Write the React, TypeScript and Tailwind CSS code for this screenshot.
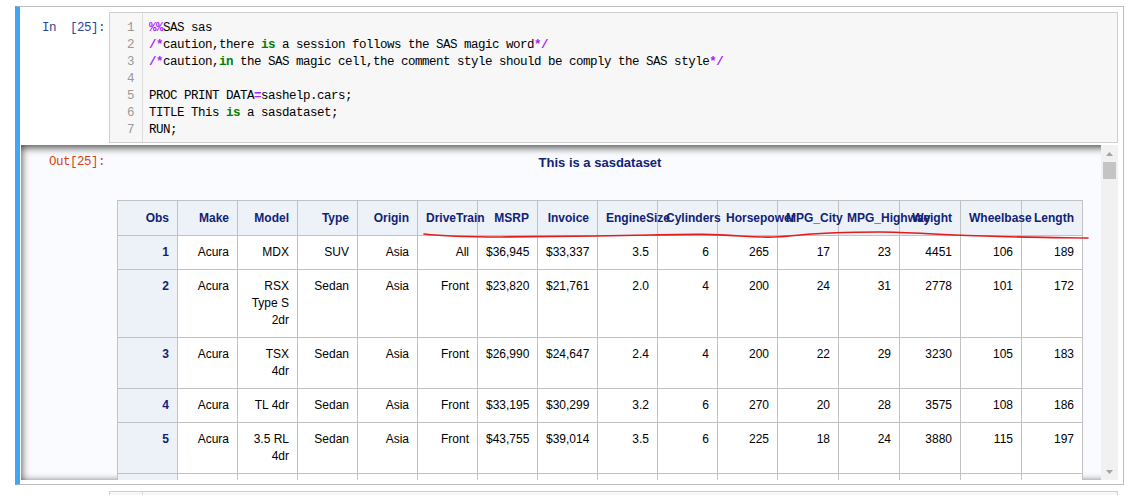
const headers = [
  'Obs', 'Make', 'Model', 'Type', 'Origin', 'DriveTrain', 'MSRP', 'Invoice', 'EngineSize',
  'Cylinders', 'Horsepower', 'MPG_City', 'MPG_Highway', 'Weight', 'Wheelbase', 'Length',
];

const rows = [
  ['1', 'Acura', 'MDX', 'SUV', 'Asia', 'All', '$36,945', '$33,337', '3.5', '6', '265', '17', '23', '4451', '106', '189'],
  ['2', 'Acura', 'RSX Type S 2dr', 'Sedan', 'Asia', 'Front', '$23,820', '$21,761', '2.0', '4', '200', '24', '31', '2778', '101', '172'],
  ['3', 'Acura', 'TSX 4dr', 'Sedan', 'Asia', 'Front', '$26,990', '$24,647', '2.4', '4', '200', '22', '29', '3230', '105', '183'],
  ['4', 'Acura', 'TL 4dr', 'Sedan', 'Asia', 'Front', '$33,195', '$30,299', '3.2', '6', '270', '20', '28', '3575', '108', '186'],
  ['5', 'Acura', '3.5 RL 4dr', 'Sedan', 'Asia', 'Front', '$43,755', '$39,014', '3.5', '6', '225', '18', '24', '3880', '115', '197'],
  ['6', 'Acura', '3.5 RL w/Navigation 4dr', 'Sedan', 'Asia', 'Front', '$46,100', '$41,100', '3.5', '6', '225', '18', '24', '3893', '115', '197'],
];

// column widths: first 11 are 60px, the rest 61px
const colWidths = headers.map((_, i) => (i < 11 ? 60 : 61));

type Tok = { t: string; c?: 'op' | 'kw' };

const code: Tok[][] = [
  [{ t: '%%', c: 'op' }, { t: 'SAS sas' }],
  [{ t: '/*', c: 'op' }, { t: 'caution,there ' }, { t: 'is', c: 'kw' }, { t: ' a session follows the SAS magic word' }, { t: '*/', c: 'op' }],
  [{ t: '/*', c: 'op' }, { t: 'caution,' }, { t: 'in', c: 'kw' }, { t: ' the SAS magic cell,the comment style should be comply the SAS style' }, { t: '*/', c: 'op' }],
  [],
  [{ t: 'PROC PRINT DATA' }, { t: '=', c: 'op' }, { t: 'sashelp.cars;' }],
  [{ t: 'TITLE This ' }, { t: 'is', c: 'kw' }, { t: ' a sasdataset;' }],
  [{ t: 'RUN;' }],
];

const mono = "font-['Liberation_Mono',monospace] text-[12.5px] tracking-[-0.5px] leading-[17px]";

function Arrow({ down }: { down?: boolean }) {
  return (
    <svg width="7" height="4" viewBox="0 0 7 4">
      <polygon points={down ? '0,0 7,0 3.5,4' : '0,4 7,4 3.5,0'} fill="#a3a3a3" />
    </svg>
  );
}

export default function App() {
  return (
    <div className="relative w-[1135px] h-[495px] overflow-hidden bg-white pt-[6px]">
      {/* selected cell */}
      <div className="ml-[15px] w-[1109px] border border-[#bdbdbd] border-l-[5px] border-l-[#42a5f5] pl-px pr-[5px] pt-[5px] pb-[4px]">
        {/* input area */}
        <div className="flex">
          <div className={`w-[88px] shrink-0 pt-[8px] pr-[4px] text-right text-[#303f9f] whitespace-pre ${mono}`}>
            {'In\u00a0\u00a0[25]:'}
          </div>
          <div className="flex-1 flex border border-[#cfcfcf] bg-[#f7f7f7] h-[131px]">
            <div className={`w-[33px] shrink-0 border-r border-[#dddddd] pt-[7px] pr-[8px] text-right text-[#999999] ${mono}`}>
              {code.map((_, i) => (
                <div key={i}>{i + 1}</div>
              ))}
            </div>
            <div className={`flex-1 pt-[7px] pl-[6px] text-black whitespace-pre ${mono}`}>
              {code.map((line, i) => (
                <div key={i} className="h-[17px]">
                  {line.map((tok, j) => (
                    <span
                      key={j}
                      className={
                        tok.c === 'op'
                          ? 'text-[#aa22ff] font-bold'
                          : tok.c === 'kw'
                          ? 'text-[#008000] font-bold'
                          : ''
                      }
                    >
                      {tok.t}
                    </span>
                  ))}
                </div>
              ))}
            </div>
          </div>
        </div>

        {/* output area, scrolled */}
        <div className="mt-[2px] h-[335px] flex bg-[#fafbfe] shadow-[inset_0_2px_8px_rgba(0,0,0,0.8)]">
          <div className="flex-1 flex overflow-hidden">
            <div className={`w-[88px] shrink-0 pt-[9px] pr-[4px] text-right text-[#d84315] ${mono}`}>Out[25]:</div>
            <div className="w-[982px] shrink-0 flex flex-col items-center font-['Liberation_Sans',Arial,sans-serif]">
              <div className="pt-[9px] text-[13px] leading-[17px] font-bold text-[#112277]">This is a sasdataset</div>
              <table className="mt-[29px] w-[965px] table-fixed border-collapse text-[12px] leading-[17px]">
                <colgroup>
                  {colWidths.map((w, i) => (
                    <col key={i} style={{ width: w }} />
                  ))}
                </colgroup>
                <thead>
                  <tr>
                    {headers.map((h) => (
                      <th
                        key={h}
                        className="border border-[#c1c1c1] bg-[#edf2f9] px-2 pt-[9px] pb-[8px] text-right font-bold text-[#112277] align-middle"
                      >
                        {h}
                      </th>
                    ))}
                  </tr>
                </thead>
                <tbody>
                  {rows.map((r) => (
                    <tr key={r[0]}>
                      {r.map((v, i) =>
                        i === 0 ? (
                          <th
                            key={i}
                            className="border border-[#c1c1c1] bg-[#edf2f9] px-2 py-2 text-right font-bold text-[#112277] align-top"
                          >
                            {v}
                          </th>
                        ) : (
                          <td key={i} className="border border-[#c1c1c1] bg-white px-2 py-2 text-right text-black align-top">
                            {v}
                          </td>
                        )
                      )}
                    </tr>
                  ))}
                </tbody>
              </table>
            </div>
          </div>
          {/* scrollbar */}
          <div className="w-[17px] shrink-0 flex flex-col bg-[#f1f1f1]">
            <div className="h-[17px] flex items-center justify-center">
              <Arrow />
            </div>
            <div className="mx-[2px] h-[17px] bg-[#c4c4c4]" />
            <div className="flex-1" />
            <div className="h-[17px] flex items-center justify-center">
              <Arrow down />
            </div>
          </div>
        </div>
      </div>

      {/* next cell, mostly below the fold */}
      <div className="ml-[15px] w-[1109px] border border-transparent border-l-[5px] pl-px pr-[5px] pt-[5px]">
        <div className="flex">
          <div className="w-[88px] shrink-0" />
          <div className="flex-1 flex border border-[#cfcfcf] bg-[#f7f7f7] h-[40px]">
            <div className="w-[33px] shrink-0 border-r border-[#dddddd]" />
          </div>
        </div>
      </div>

      {/* red hand-drawn annotation */}
      <svg className="absolute inset-0 pointer-events-none" width="1135" height="495">
        <path
          d="M424,234 C450,237 470,237 500,237 S600,236 650,235 S710,234 740,236 S780,237 800,235 S850,232 880,232 S940,235 1000,236.5 S1060,237.5 1088,238"
          fill="none"
          stroke="#e31b1b"
          strokeWidth="1.6"
          strokeLinecap="round"
        />
      </svg>
    </div>
  );
}
